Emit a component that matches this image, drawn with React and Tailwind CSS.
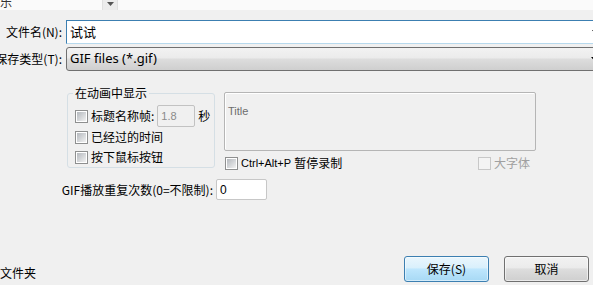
import React from 'react';

const cjk = { fontFamily: '"Noto Sans CJK SC", "Microsoft YaHei", sans-serif' };
const latin = { fontFamily: '"Liberation Sans", "Noto Sans CJK SC", sans-serif' };

function Check(props) {
  return (
    <span
      className={`inline-flex items-center justify-center w-[13px] h-[13px] shrink-0 border ${
        props.disabled ? 'border-[#c8c8c8] bg-[#f4f4f4]' : 'border-[#8e8f8f] bg-white'
      }`}
    >
      {!props.disabled && (
        <span className="block w-[9px] h-[9px] bg-gradient-to-br from-[#b4b8bd] to-[#f2f2f2]"></span>
      )}
    </span>
  );
}

function CheckRow(props) {
  return (
    <div className={`flex items-center gap-[3px] ${props.className || ''}`}>
      <Check disabled={props.disabled} />
      <span
        className={`text-[12px] leading-[14px] whitespace-nowrap ${props.disabled ? 'text-[#a0a0a0]' : 'text-black'}`}
        style={cjk}
      >
        {props.children}
      </span>
    </div>
  );
}

function Arrow() {
  return (
    <svg width="7" height="4" viewBox="0 0 7 4" className="shrink-0">
      <path d="M0 0h7L3.5 4z" fill="#000" />
    </svg>
  );
}

export default function App() {
  return (
    <div className="w-[593px] h-[285px] overflow-hidden bg-[#f0f0f0] text-black select-none" style={cjk}>
      {/* top strip, cut list */}
      <div className="flex h-[10px] bg-[#fafafa] overflow-hidden">
        <div className="w-[102px] overflow-hidden">
          <span className="block -mt-[6px] text-[12px] leading-[16px] text-[#333]">乐</span>
        </div>
        <div className="w-[16px] flex justify-center items-start pt-[2px] bg-[#ececec] border-l border-r border-[#e0e0e0]">
          <svg width="7" height="4" viewBox="0 0 7 4">
            <path d="M0 0h7L3.5 4z" fill="#555" />
          </svg>
        </div>
        <div className="flex-1 bg-[#fafafa]"></div>
      </div>

      {/* file name */}
      <div className="flex items-center mt-[10px] h-[24px]">
        <div className="w-[62px] flex justify-end shrink-0">
          <span className="text-[12px] whitespace-nowrap">文件名(N):</span>
        </div>
        <div className="ml-[4px] w-[540px] shrink-0 h-[24px] flex items-center bg-white border border-[#3c7fb1] border-b-[#b7d9ed] border-r-0 pl-[3px] pr-[7px]">
          <span className="text-[13px] flex-1">试试</span>
          <Arrow />
        </div>
      </div>

      {/* file type */}
      <div className="flex items-center mt-[3px] h-[24px]">
        <div className="w-[62px] flex justify-end shrink-0">
          <span className="text-[12px] whitespace-nowrap">保存类型(T):</span>
        </div>
        <div className="ml-[4px] w-[540px] shrink-0 h-[24px] flex items-center rounded-[3px] border border-[#707070] bg-[linear-gradient(#f2f2f2_0%,#ebebeb_45%,#dddddd_50%,#cfcfcf_100%)] pl-[3px] pr-[7px]">
          <span className="text-[13px] flex-1" style={{ fontFamily: '"Noto Sans", "Noto Sans CJK SC", sans-serif' }}>
            GIF files (*.gif)
          </span>
          <Arrow />
        </div>
      </div>

      {/* options */}
      <div className="flex mt-[15px]">
        <div className="relative ml-[67px] w-[148px] pt-[7px] shrink-0">
          <span className="absolute top-0 left-[6px] px-[2px] bg-[#f0f0f0] text-[12px] leading-[14px]">在动画中显示</span>
          <div className="border border-[#d5dfe5] rounded-[3px] pt-[11px] pl-[7px] h-[75px]">
            <div className="flex items-center h-[22px]">
              <CheckRow>标题名称帧:</CheckRow>
              <div
                className="ml-[3px] w-[38px] h-[22px] border border-[#c2c2c2] rounded-[2px] bg-[#f0f0f0] flex items-center pl-[3px] text-[11px] text-[#8a8a8a]"
                style={latin}
              >
                1.8
              </div>
              <span className="ml-[3px] text-[12px]">秒</span>
            </div>
            <CheckRow className="h-[20px]">已经过的时间</CheckRow>
            <CheckRow className="h-[20px]">按下鼠标按钮</CheckRow>
          </div>
        </div>

        <div className="ml-[9px] w-[312px] pt-[6px] shrink-0">
          <div className="h-[59px] border border-[#b5b5b5] rounded-[2px] shadow-[inset_1px_1px_0_#ffffff] bg-[#f0f0f0] px-[3px] pt-[3px]">
            <span className="text-[11px] leading-[13px] text-[#6d6d6d]" style={latin}>
              Title
            </span>
          </div>
          <div className="flex items-center mt-[5px] pl-[1px] pr-[6px]">
            <div className="flex items-center gap-[3px]">
              <Check />
              <span className="text-[11px] leading-[14px] whitespace-nowrap" style={latin}>Ctrl+Alt+P</span>
              <span className="text-[12px] leading-[14px] whitespace-nowrap">暂停录制</span>
            </div>
            <CheckRow className="ml-auto" disabled>大字体</CheckRow>
          </div>
        </div>
      </div>

      {/* repeat count */}
      <div className="flex items-center mt-[9px] h-[21px]">
        <div className="w-[213px] flex justify-end shrink-0">
          <span className="text-[12px] whitespace-nowrap">GIF播放重复次数(0=不限制):</span>
        </div>
        <div
          className="ml-[3px] w-[51px] h-[21px] bg-white border border-[#c7c7c7] rounded-[2px] flex items-center pl-[3px] text-[12px]"
          style={latin}
        >
          0
        </div>
      </div>

      {/* footer */}
      <div className="flex items-start mt-[56px]">
        <span className="mt-[10px] text-[12px] leading-[14px] whitespace-nowrap w-[404px] shrink-0">文件夹</span>
        <button className="w-[85px] h-[26px] shrink-0 rounded-[3px] border border-[#3c7fb1] bg-[linear-gradient(#eaf6fd_0%,#d9f0fc_45%,#bee6fd_50%,#a7d9f5_100%)] text-[12px] shadow-[inset_0_0_0_1px_#ffffff80]">
          保存(S)
        </button>
        <button className="ml-[15px] w-[85px] h-[26px] shrink-0 rounded-[3px] border border-[#707070] bg-[linear-gradient(#f2f2f2_0%,#ebebeb_45%,#dddddd_50%,#cfcfcf_100%)] text-[12px] shadow-[inset_0_0_0_1px_#ffffff90]">
          取消
        </button>
      </div>
    </div>
  );
}
